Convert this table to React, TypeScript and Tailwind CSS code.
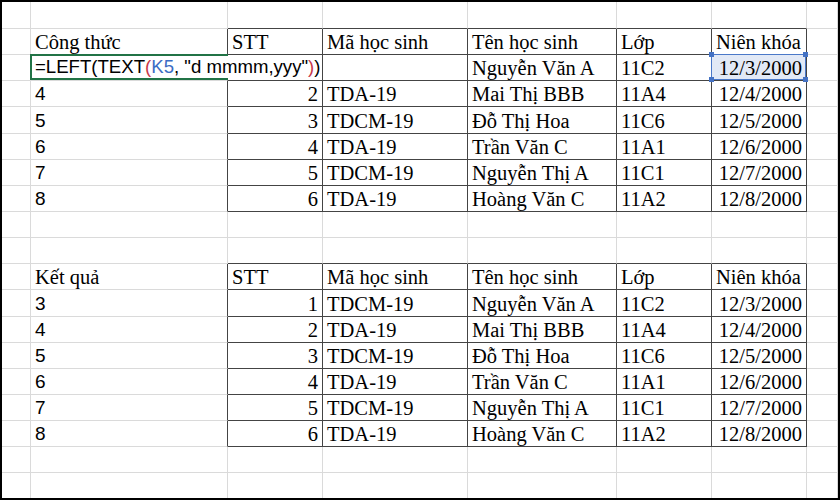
import React from "react";

type Row = {
  a?: string;
  serifA?: boolean;
  cells?: string[];
  header?: boolean;
  table?: boolean;
  formula?: boolean;
};

const HEAD = ["STT", "Mã học sinh", "Tên học sinh", "Lớp", "Niên khóa"];

const DATA = [
  ["1", "TDCM-19", "Nguyễn Văn A", "11C2", "12/3/2000"],
  ["2", "TDA-19", "Mai Thị BBB", "11A4", "12/4/2000"],
  ["3", "TDCM-19", "Đỗ Thị Hoa", "11C6", "12/5/2000"],
  ["4", "TDA-19", "Trần Văn C", "11A1", "12/6/2000"],
  ["5", "TDCM-19", "Nguyễn Thị A", "11C1", "12/7/2000"],
  ["6", "TDA-19", "Hoàng Văn C", "11A2", "12/8/2000"],
];

const ROWS: Row[] = [
  {},
  { a: "Công thức", serifA: true, cells: HEAD, header: true, table: true },
  { formula: true, cells: ["", "", "Nguyễn Văn A", "11C2", "12/3/2000"], table: true },
  ...DATA.slice(1).map((d, i) => ({ a: String(i + 4), cells: d, table: true })),
  {},
  {},
  { a: "Kết quả", serifA: true, cells: HEAD, header: true, table: true },
  ...DATA.map((d, i) => ({ a: String(i + 3), cells: d, table: true })),
  {},
  {},
];

const serif = "font-['Liberation_Serif','Times_New_Roman',serif] text-[20.5px]";
const sans = "font-['Liberation_Sans',Arial,sans-serif] text-[19px]";

function Formula() {
  return (
    <>
      {/* in-cell editor, text runs over STT column */}
      <div className="absolute left-0 top-0 z-10 h-[calc(100%-1px)] w-[291px] bg-white flex items-end pb-[1px] pl-[4px] leading-[22px] whitespace-nowrap text-black font-['Liberation_Sans',Arial,sans-serif] text-[18.6px]">
        <span>=LEFT(TEXT</span>
        <span className="text-[#c8384a]">(</span>
        <span className="text-[#3b6cc4]">K5</span>
        <span className="whitespace-pre">, "d mmmm,yyy"</span>
        <span className="text-[#c8384a]">)</span>
        <span>)</span>
      </div>
      <div className="absolute -left-[1px] -top-[1px] z-20 h-[calc(100%+1px)] w-[198px] border-l-2 border-t-2 border-b-2 border-[#217346] pointer-events-none" />
    </>
  );
}

function Selected() {
  const sq = "absolute w-[5px] h-[5px] bg-[#4472c4]";
  return (
    <div className="absolute -left-[1px] -top-[1px] right-0 bottom-0 z-10 border border-[#4a78c8]">
      <div className={`${sq} -left-[3px] -top-[3px]`} />
      <div className={`${sq} -right-[3px] -top-[3px]`} />
      <div className={`${sq} -left-[3px] -bottom-[3px]`} />
      <div className={`${sq} -right-[3px] -bottom-[3px]`} />
    </div>
  );
}

export default function App() {
  return (
    <div className="w-[840px] h-[500px] border-2 border-black overflow-hidden bg-white text-black">
      <div className="grid grid-cols-[29px_197px_95px_145px_149px_95px_95px_31px] grid-rows-[27px_repeat(18,26.15px)]">
        {ROWS.map((row, r) => {
          const next = ROWS[r + 1];
          return Array.from({ length: 8 }).map((_, c) => {
            const inTable = !!row.table;
            const darkRight = inTable && c >= 1 && c <= 6;
            const darkBottom = c >= 2 && c <= 6 && (inTable || !!(next && next.header));
            let content: React.ReactNode = null;
            let align = "justify-start pl-[4px]";
            let font = serif;
            if (c === 1 && row.a) {
              content = row.a;
              font = row.serifA ? serif : sans;
            }
            if (c >= 2 && c <= 6 && row.cells) {
              content = row.cells[c - 2];
              if (!row.header && (c === 2 || c === 6)) align = "justify-end pr-[4px]";
            }
            const selected = row.formula && c === 6;
            return (
              <div
                key={`${r}-${c}`}
                className={`relative border-r border-b ${darkRight ? "border-r-[#444444]" : "border-r-[#dadada]"} ${darkBottom ? "border-b-[#444444]" : "border-b-[#dadada]"} ${selected ? "bg-[#e2e9f6]" : ""}`}
              >
                {content !== null && content !== "" && (
                  <div className={`h-full flex items-end pb-[1px] leading-[22px] whitespace-nowrap overflow-hidden ${align} ${font}`}>
                    {content}
                  </div>
                )}
                {row.formula && c === 1 && <Formula />}
                {selected && <Selected />}
              </div>
            );
          });
        })}
      </div>
    </div>
  );
}
